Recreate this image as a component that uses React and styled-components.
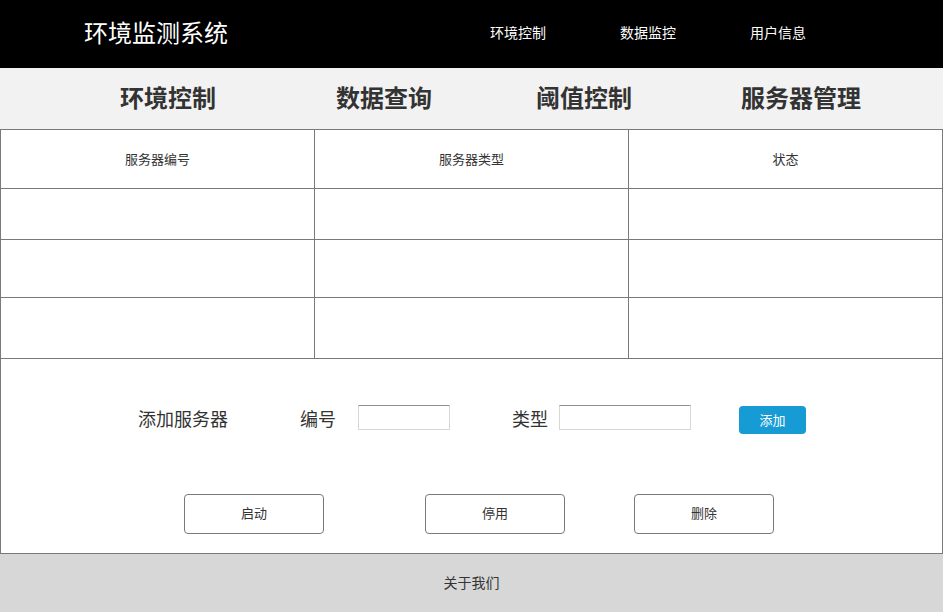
import React from "react";
import styled, { createGlobalStyle } from "styled-components";

const GlobalStyle = createGlobalStyle`
  html, body {
    margin: 0;
    padding: 0;
    background: #fff;
  }
  body {
    font-family: "Noto Sans CJK SC", "Noto Sans", sans-serif;
    color: #333;
  }
  * {
    box-sizing: border-box;
  }
`;

const Page = styled.div`
  width: 943px;
  display: flex;
  flex-direction: column;
`;

const Header = styled.header`
  display: flex;
  align-items: center;
  height: 68px;
  background: #000;
  padding: 0 0 4px 84px;
`;

const Title = styled.div`
  font-size: 24px;
  color: #fff;
  line-height: 1;
  width: 406px;
`;

const TopNav = styled.nav`
  display: flex;
  gap: 74px;
`;

const TopLink = styled.a`
  font-size: 14px;
  color: #fff;
  text-decoration: none;
  cursor: pointer;
`;

const SubNav = styled.nav`
  display: flex;
  align-items: center;
  height: 61px;
  background: #f2f2f2;
  padding: 0 0 4px 120px;
`;

const SubLink = styled.a`
  font-size: 24px;
  font-weight: 700;
  color: #333;
  margin-left: ${(p) => p.$offset || 0}px;
  cursor: pointer;
`;

const Table = styled.table`
  width: 943px;
  border-collapse: collapse;
  table-layout: fixed;
`;

const Cell = styled.td`
  border: 1px solid #797979;
  height: ${(p) => p.$h}px;
  text-align: center;
  font-size: 13px;
  color: #333;
  padding: 0 0 2px;
`;

const FormBox = styled.section`
  height: 195px;
  border: 1px solid #797979;
  border-top: none;
  display: flex;
  flex-direction: column;
`;

const AddRow = styled.div`
  display: flex;
  align-items: flex-start;
  height: 29px;
  margin-top: 46px;
  padding-left: 137px;
`;

const Label = styled.span`
  font-size: 18px;
  color: #333;
  margin-left: ${(p) => p.$offset || 0}px;
  line-height: 26px;
`;

const Input = styled.input`
  width: ${(p) => p.$w}px;
  height: 25px;
  margin-left: ${(p) => p.$offset || 0}px;
  border: 1px solid #d7d7d7;
  border-top-color: #909090;
  background: #fff;
  outline: none;
`;

const PrimaryButton = styled.button`
  width: 67px;
  height: 28px;
  margin: 1px 0 0 48px;
  padding: 0 0 2px;
  background: #169bd5;
  color: #fff;
  border: none;
  border-radius: 4px;
  font-family: inherit;
  font-size: 13px;
  cursor: pointer;
`;

const ActionRow = styled.div`
  display: flex;
  margin-top: 60px;
  padding-left: 183px;
`;

const ActionButton = styled.button`
  width: 140px;
  height: 40px;
  margin-left: ${(p) => p.$offset || 0}px;
  padding: 0 0 3px;
  background: #fff;
  border: 1px solid #797979;
  border-radius: 4px;
  font-family: inherit;
  font-size: 13px;
  color: #333;
  cursor: pointer;
`;

const Footer = styled.footer`
  height: 58px;
  background: #d7d7d7;
  display: flex;
  align-items: center;
  justify-content: center;
  font-size: 14px;
  color: #333;
  padding-bottom: 2px;
`;

const rows = [51, 58, 61];

export default function App() {
  return (
    <Page>
      <GlobalStyle />
      <Header>
        <Title>环境监测系统</Title>
        <TopNav>
          <TopLink>环境控制</TopLink>
          <TopLink>数据监控</TopLink>
          <TopLink>用户信息</TopLink>
        </TopNav>
      </Header>
      <SubNav>
        <SubLink>环境控制</SubLink>
        <SubLink $offset={120}>数据查询</SubLink>
        <SubLink $offset={104}>阈值控制</SubLink>
        <SubLink $offset={109}>服务器管理</SubLink>
      </SubNav>
      <Table>
        <tbody>
          <tr>
            <Cell $h={59}>服务器编号</Cell>
            <Cell $h={59}>服务器类型</Cell>
            <Cell $h={59}>状态</Cell>
          </tr>
          {rows.map((h, i) => (
            <tr key={i}>
              <Cell $h={h} />
              <Cell $h={h} />
              <Cell $h={h} />
            </tr>
          ))}
        </tbody>
      </Table>
      <FormBox>
        <AddRow>
          <Label>添加服务器</Label>
          <Label $offset={72}>编号</Label>
          <Input $w={92} $offset={22} />
          <Label $offset={62}>类型</Label>
          <Input $w={132} $offset={11} />
          <PrimaryButton>添加</PrimaryButton>
        </AddRow>
        <ActionRow>
          <ActionButton>启动</ActionButton>
          <ActionButton $offset={101}>停用</ActionButton>
          <ActionButton $offset={69}>删除</ActionButton>
        </ActionRow>
      </FormBox>
      <Footer>关于我们</Footer>
    </Page>
  );
}
